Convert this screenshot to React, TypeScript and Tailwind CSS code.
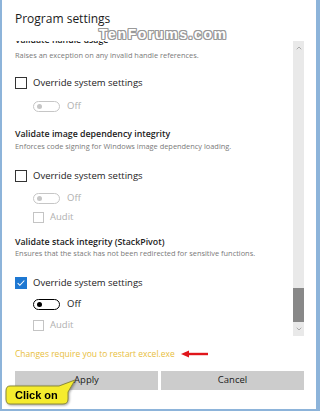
import { ChevronUp, ChevronDown } from 'lucide-react';

const font = { fontFamily: '"Open Sans", "Noto Sans", sans-serif' };

function Checkbox({ checked, disabled }: { checked?: boolean; disabled?: boolean }) {
  if (checked) {
    return (
      <span className="grid size-[12px] place-items-center bg-[#1e78d2]">
        <svg viewBox="0 0 12 12" className="size-[10px]">
          <path d="M2 6.2 L4.6 8.8 L10 3" fill="none" stroke="#fff" strokeWidth="1.3" />
        </svg>
      </span>
    );
  }
  return (
    <span
      className={
        disabled
          ? 'size-[11px] border border-[#c4c4c4]'
          : 'size-[12px] border-[1.5px] border-[#333]'
      }
    />
  );
}

function Toggle({ enabled }: { enabled?: boolean }) {
  return (
    <span
      className={
        'flex h-[11px] w-[27px] items-center rounded-full border-[1.5px] pl-[3px] ' +
        (enabled ? 'border-black' : 'border-[#c6c6c6]')
      }
    >
      <span className={'size-[5px] rounded-full ' + (enabled ? 'bg-black' : 'bg-[#c6c6c6]')} />
    </span>
  );
}

function CheckRow({ checked, className }: { checked?: boolean; className: string }) {
  return (
    <div className={'flex h-[14px] items-center gap-[6px] ' + className}>
      <Checkbox checked={checked} />
      <span className="text-[9.5px] text-[#222]">Override system settings</span>
    </div>
  );
}

function ToggleRow({ enabled, className }: { enabled?: boolean; className: string }) {
  return (
    <div className={'flex h-[12px] items-center gap-[7px] pl-[18px] ' + className}>
      <Toggle enabled={enabled} />
      <span className={'text-[9.5px] ' + (enabled ? 'text-[#222]' : 'text-[#b0b0b0]')}>Off</span>
    </div>
  );
}

function AuditRow({ className }: { className: string }) {
  return (
    <div className={'flex h-[12px] items-center gap-[6px] pl-[18px] ' + className}>
      <Checkbox disabled />
      <span className="text-[9.5px] text-[#b0b0b0]">Audit</span>
    </div>
  );
}

export default function App() {
  return (
    <div
      style={font}
      className="relative flex h-[411px] w-[320px] flex-col overflow-hidden border-b-2 border-l-2 border-r-4 border-[#8db4da] bg-white"
    >
      {/* title */}
      <div className="pl-[13px] pt-[10px] text-[12px] leading-[18px] text-[#1b1b1b]">
        Program settings
      </div>

      {/* watermark */}
      <div
        aria-hidden
        className="absolute left-[97px] top-[27px] text-[14px] font-bold leading-[15px] tracking-[1.6px] text-white"
        style={{
          fontFamily: '"Liberation Sans", Arial, sans-serif',
          textShadow:
            '1px 0 0 #999, -1px 0 0 #999, 0 1px 0 #999, 0 -1px 0 #999, 1px 1px 0 #999, -1px -1px 0 #999, 1px -1px 0 #999, -1px 1px 0 #999',
        }}
      >
        TenForums.com
      </div>

      {/* scroll area + scrollbar */}
      <div className="mt-[13px] flex h-[295px]">
        <div className="flex-1 overflow-hidden pl-[13px]">
          <div className="-mt-[6px] flex h-[12px] items-center text-[8.8px] font-semibold text-[#1b1b1b]">
            Validate handle usage
          </div>
          <div className="mt-[3px] flex h-[12px] items-center text-[7.4px] text-[#7a7a7a]">
            Raises an exception on any invalid handle references.
          </div>
          <CheckRow className="mt-[14px]" />
          <ToggleRow className="mt-[10px]" />

          <div className="mt-[17px] flex h-[12px] items-center text-[8.8px] font-semibold text-[#1b1b1b]">
            Validate image dependency integrity
          </div>
          <div className="flex h-[12px] items-center text-[7.4px] text-[#7a7a7a]">
            Enforces code signing for Windows image dependency loading.
          </div>
          <CheckRow className="mt-[16px]" />
          <ToggleRow className="mt-[9px]" />
          <AuditRow className="mt-[7px]" />

          <div className="mt-[14px] flex h-[11px] items-center text-[8.8px] font-semibold text-[#1b1b1b]">
            Validate stack integrity (StackPivot)
          </div>
          <div className="flex h-[12px] items-center text-[7.4px] text-[#7a7a7a]">
            Ensures that the stack has not been redirected for sensitive functions.
          </div>
          <CheckRow checked className="mt-[16px]" />
          <ToggleRow enabled className="mt-[8px]" />
          <AuditRow className="mt-[9px]" />
        </div>

        <div className="mr-[12px] flex w-[11px] flex-col items-center bg-[#e9e9e9]">
          <ChevronUp className="mt-[3px] size-[8px] text-[#8a8a8a]" strokeWidth={2} />
          <div className="flex-1" />
          <div className="h-[34px] w-full bg-[#888]" />
          <ChevronDown className="mb-[3px] mt-[3px] size-[8px] text-[#8a8a8a]" strokeWidth={2} />
        </div>
      </div>

      {/* restart notice */}
      <div className="mt-[12px] flex h-[12px] items-center gap-[6px] pl-[13px]">
        <span className="text-[8.5px] text-[#e8be3c]">Changes require you to restart excel.exe</span>
        <svg width="28" height="8" viewBox="0 0 28 8">
          <path d="M6 4 H27" stroke="#e0161b" strokeWidth="2.4" />
          <path d="M0 4 L8 0.5 L8 7.5 Z" fill="#e0161b" />
        </svg>
      </div>

      {/* buttons */}
      <div className="mt-[11px] flex gap-[3px] pl-[13px] pr-[12px]">
        <button className="h-[19px] flex-1 bg-[#cccccc] text-[9.5px] text-[#1b1b1b]">Apply</button>
        <button className="h-[19px] flex-1 bg-[#cccccc] text-[9.5px] text-[#1b1b1b]">Cancel</button>
      </div>

      {/* callout */}
      <div className="absolute left-[1px] top-[378px] h-[28px] w-[74px] drop-shadow-[1px_1px_1px_rgba(0,0,0,0.35)]">
        <svg className="absolute inset-0" width="74" height="28" viewBox="0 0 74 28">
          <path
            d="M7 8 H56 L72 2 L65 14 V21 Q65 26 60 26 H7 Q3 26 3 21 V13 Q3 8 7 8 Z"
            fill="#f5ec2e"
            stroke="#8c8a3a"
            strokeWidth="1"
          />
        </svg>
        <span
          className="absolute left-[12px] top-[11px] text-[11px] font-bold leading-[13px] text-black"
          style={{ fontFamily: '"Liberation Sans", Arial, sans-serif' }}
        >
          Click on
        </span>
      </div>
    </div>
  );
}
